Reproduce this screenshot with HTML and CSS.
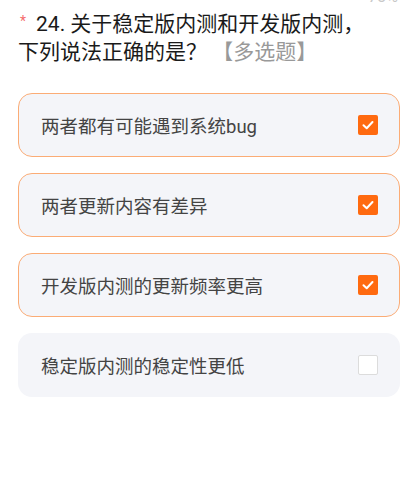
FILE: index.html
```html
<!DOCTYPE html>
<html lang="zh">
<head>
<meta charset="utf-8">
<link rel="stylesheet" href="styles.css">
</head>
<body>
<div class="progress">73%</div>
<div class="question">
  <span class="req">*</span><span class="num">24.</span>关于稳定版内测和开发版内测，<br>下列说法正确的是？ <span class="tag">【多选题】</span>
</div>
<div class="options">
  <div class="option checked">
    <span class="label">两者都有可能遇到系统bug</span>
    <span class="box"><svg viewBox="0 0 20 20" width="20" height="20"><path d="M5.5 10.2 L8.7 13.2 L14.5 7" fill="none" stroke="#fff" stroke-width="2" stroke-linecap="round" stroke-linejoin="round"/></svg></span>
  </div>
  <div class="option checked">
    <span class="label">两者更新内容有差异</span>
    <span class="box"><svg viewBox="0 0 20 20" width="20" height="20"><path d="M5.5 10.2 L8.7 13.2 L14.5 7" fill="none" stroke="#fff" stroke-width="2" stroke-linecap="round" stroke-linejoin="round"/></svg></span>
  </div>
  <div class="option checked">
    <span class="label">开发版内测的更新频率更高</span>
    <span class="box"><svg viewBox="0 0 20 20" width="20" height="20"><path d="M5.5 10.2 L8.7 13.2 L14.5 7" fill="none" stroke="#fff" stroke-width="2" stroke-linecap="round" stroke-linejoin="round"/></svg></span>
  </div>
  <div class="option">
    <span class="label">稳定版内测的稳定性更低</span>
    <span class="box empty"></span>
  </div>
</div>
</body>
</html>
```
FILE: styles.css
```css
html, body {
  margin: 0;
  padding: 0;
  background: #fff;
}
body {
  font-family: "Roboto", "Noto Sans CJK SC", "Noto Sans", sans-serif;
  padding: 0 14px 0 18px;
  position: relative;
  width: 414px;
  box-sizing: border-box;
}
.progress {
  position: absolute;
  right: 16px;
  top: -11px;
  font-size: 16px;
  line-height: 16px;
  color: #c8c8c8;
}
.question {
  padding-top: 10px;
  font-size: 21px;
  line-height: 28px;
  color: #1a1a1a;
}
.req {
  color: #f56c6c;
  font-size: 14px;
  vertical-align: top;
  display: inline-block;
  margin: 0 10px 0 2px;
  line-height: 22px;
}
.num {
  margin-right: 5px;
}
.tag {
  color: #999;
}
.options {
  margin-top: 27px;
  display: flex;
  flex-direction: column;
  gap: 16px;
}
.option {
  height: 64px;
  box-sizing: border-box;
  border: 1px solid transparent;
  border-radius: 14px;
  background: #f4f5f9;
  display: flex;
  align-items: center;
  justify-content: space-between;
  padding: 0 21px 0 22px;
}
.option.checked {
  border-color: #fbac76;
}
.label {
  font-size: 18.5px;
  color: #444;
}
.box {
  width: 20px;
  height: 20px;
  border-radius: 2px;
  background: #ff6a10;
  display: flex;
}
.box.empty {
  background: #fff;
  border: 1px solid #dcdcdc;
  box-sizing: border-box;
}
```
